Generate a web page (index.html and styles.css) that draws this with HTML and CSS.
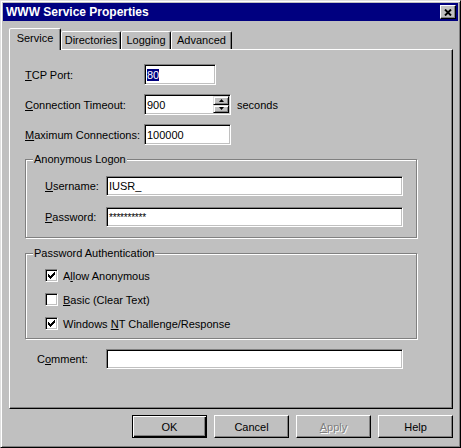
FILE: index.html
```html
<!DOCTYPE html>
<html lang="en">
<head>
  <meta charset="UTF-8">
  <title>WWW Service Properties</title>
  <link rel="stylesheet" href="styles.css">
</head>
<body>

<div class="window">
  <div class="titlebar">
    <span class="title">WWW Service Properties</span>
    <span class="close">
      <svg width="8" height="7" viewBox="0 0 8 7"><path d="M1 0.5 L7 6.5 M7 0.5 L1 6.5" stroke="#000" stroke-width="1.9" fill="none"/></svg>
    </span>
  </div>

  <div class="tabs">
    <div class="tab active tab-service">Service</div>
    <div class="tab tab-dirs">Directories</div>
    <div class="tab tab-log">Logging</div>
    <div class="tab tab-adv">Advanced</div>
  </div>

  <div class="panel">
    <div class="row">
      <span class="lbl"><u>T</u>CP Port:</span>
      <div class="field f-port"><span class="sel">80</span></div>
    </div>
    <div class="row">
      <span class="lbl"><u>C</u>onnection Timeout:</span>
      <div class="field f-wide spin">
        <span class="val">900</span>
        <div class="spinner">
          <span class="sbtn"><svg width="5" height="3" viewBox="0 0 5 3"><path d="M0 3 L2.5 0 L5 3 Z" fill="#000"/></svg></span>
          <span class="sbtn"><svg width="5" height="3" viewBox="0 0 5 3"><path d="M0 0 L5 0 L2.5 3 Z" fill="#000"/></svg></span>
        </div>
      </div>
      <span class="unit">seconds</span>
    </div>
    <div class="row">
      <span class="lbl"><u>M</u>aximum Connections:</span>
      <div class="field f-wide">100000</div>
    </div>

    <div class="group logon">
      <span class="legend">Anonymous Logon</span>
      <div class="grow">
        <span class="glbl"><u>U</u>sername:</span>
        <div class="field f-long">IUSR_</div>
      </div>
      <div class="grow">
        <span class="glbl"><u>P</u>assword:</span>
        <div class="field f-long"><span class="stars">**********</span></div>
      </div>
    </div>

    <div class="group auth">
      <span class="legend">Password Authentication</span>
      <div class="crow">
        <span class="cb"><svg width="7" height="7" viewBox="0 0 7 7" shape-rendering="crispEdges"><path d="M0 2h1v1h1v1h1v-1h1v-1h1v-1h1v-1h1v3h-1v1h-1v1h-1v1h-1v1h-1v-1h-1v-1h-1z" fill="#000"/></svg></span>
        <span>A<u>l</u>low Anonymous</span>
      </div>
      <div class="crow">
        <span class="cb"></span>
        <span><u>B</u>asic (Clear Text)</span>
      </div>
      <div class="crow">
        <span class="cb"><svg width="7" height="7" viewBox="0 0 7 7" shape-rendering="crispEdges"><path d="M0 2h1v1h1v1h1v-1h1v-1h1v-1h1v-1h1v3h-1v1h-1v1h-1v1h-1v1h-1v-1h-1v-1h-1z" fill="#000"/></svg></span>
        <span>Windows <u>N</u>T Challenge/Response</span>
      </div>
    </div>

    <div class="comment">
      <span class="clbl">C<u>o</u>mment:</span>
      <div class="field f-long"></div>
    </div>
  </div>

  <div class="buttons">
    <div class="btn default">OK</div>
    <div class="btn">Cancel</div>
    <div class="btn disabled"><span><u>A</u>pply</span></div>
    <div class="btn">Help</div>
  </div>
</div>

</body>
</html>
```

FILE: styles.css
```css
body { margin: 0; font-family: "Liberation Sans", Arial, sans-serif; font-size: 11px; color: #000; background: #c0c0c0; }
u { text-decoration: underline; text-underline-offset: 1px; }

.window { width: 461px; height: 448px; box-sizing: border-box; background: #c0c0c0; border: 1px solid; border-color: #dfdfdf #000 #000 #dfdfdf; box-shadow: inset 1px 1px #fff, inset -1px -1px #808080; padding: 2px; }

.titlebar { height: 18px; background: #000080; color: #fff; display: flex; align-items: center; justify-content: space-between; padding: 0 2px 0 3px; }
.title { font-weight: bold; font-size: 12px; }
.close { width: 16px; height: 14px; box-sizing: border-box; background: #c0c0c0; border: 1px solid; border-color: #fff #000 #000 #fff; box-shadow: inset -1px -1px #808080; display: flex; align-items: center; justify-content: center; }

.tabs { display: flex; align-items: flex-end; height: 21px; margin: 7px 0 0 6px; position: relative; z-index: 1; }
.tab { box-sizing: border-box; height: 18px; padding-top: 2px; line-height: 13px; text-align: center; background: #c0c0c0; border: 1px solid; border-bottom: 0; border-color: #fff #000 transparent #fff; border-radius: 2px 2px 0 0; box-shadow: inset -1px 0 #808080; }
.tab.active { height: 22px; margin-bottom: -1px; padding-top: 3px; }
.tab-service { width: 52px; }
.tab-dirs { width: 60px; }
.tab-log { width: 50px; }
.tab-adv { width: 61px; }

.panel { box-sizing: border-box; width: 444px; height: 360px; margin-left: 6px; border: 1px solid; border-color: #fff #000 #000 #fff; box-shadow: inset -1px -1px #808080; padding: 14px 0 0 15px; display: flex; flex-direction: column; }

.row { display: flex; align-items: center; height: 21px; margin-bottom: 9px; }
.lbl { width: 119px; }
.unit { margin-left: 6px; }

.field { box-sizing: border-box; height: 21px; background: #fff; border: 1px solid; border-color: #808080 #fff #fff #808080; box-shadow: inset 1px 1px #000, inset -1px -1px #c0c0c0; padding: 0 2px; display: flex; align-items: center; }
.f-port { width: 72px; }
.f-wide { width: 87px; }
.f-long { width: 297px; height: 20px; }
.sel { background: #000080; color: #fff; }
.stars { font-size: 10px; letter-spacing: -0.2px; }

.spin { padding-right: 0; }
.spin .val { flex: 1; }
.spinner { align-self: stretch; width: 16px; margin: 1px 1px 1px 0; display: flex; flex-direction: column; }
.sbtn { flex: 1; box-sizing: border-box; background: #c0c0c0; border: 1px solid; border-color: #dfdfdf #000 #000 #dfdfdf; box-shadow: inset 1px 1px #fff, inset -1px -1px #808080; display: flex; align-items: center; justify-content: center; }

.group { position: relative; width: 392px; box-sizing: border-box; border: 1px solid #808080; box-shadow: inset 1px 1px #fff, 1px 1px #fff; }
.legend { position: absolute; top: -7px; left: 7px; padding: 0 1px; line-height: 13px; background: #c0c0c0; }
.logon { margin-top: 5px; padding: 16px 0 10px 19px; }
.grow { display: flex; align-items: center; height: 20px; }
.grow + .grow { margin-top: 11px; }
.glbl { width: 61px; }

.auth { margin-top: 15px; padding: 15px 0 8px 19px; }
.crow { display: flex; align-items: center; height: 13px; }
.crow + .crow { margin-top: 11px; }
.cb { width: 13px; height: 13px; box-sizing: border-box; background: #fff; border: 1px solid; border-color: #808080 #fff #fff #808080; box-shadow: inset 1px 1px #000, inset -1px -1px #c0c0c0; margin-right: 5px; display: flex; align-items: center; justify-content: center; }

.comment { display: flex; align-items: center; margin-top: 10px; padding-left: 12px; }
.clbl { width: 69px; }

.buttons { display: flex; justify-content: flex-end; gap: 7px; width: 444px; margin: 6px 0 0 6px; }
.btn { box-sizing: border-box; width: 75px; height: 23px; border: 1px solid; border-color: #fff #000 #000 #fff; box-shadow: inset -1px -1px #808080; display: flex; align-items: center; justify-content: center; }
.btn.default { border-color: #000; box-shadow: inset 1px 1px #fff, inset -1px -1px #000, inset -2px -2px #808080; }
.btn.disabled { color: #808080; text-shadow: 1px 1px #fff; }
```
